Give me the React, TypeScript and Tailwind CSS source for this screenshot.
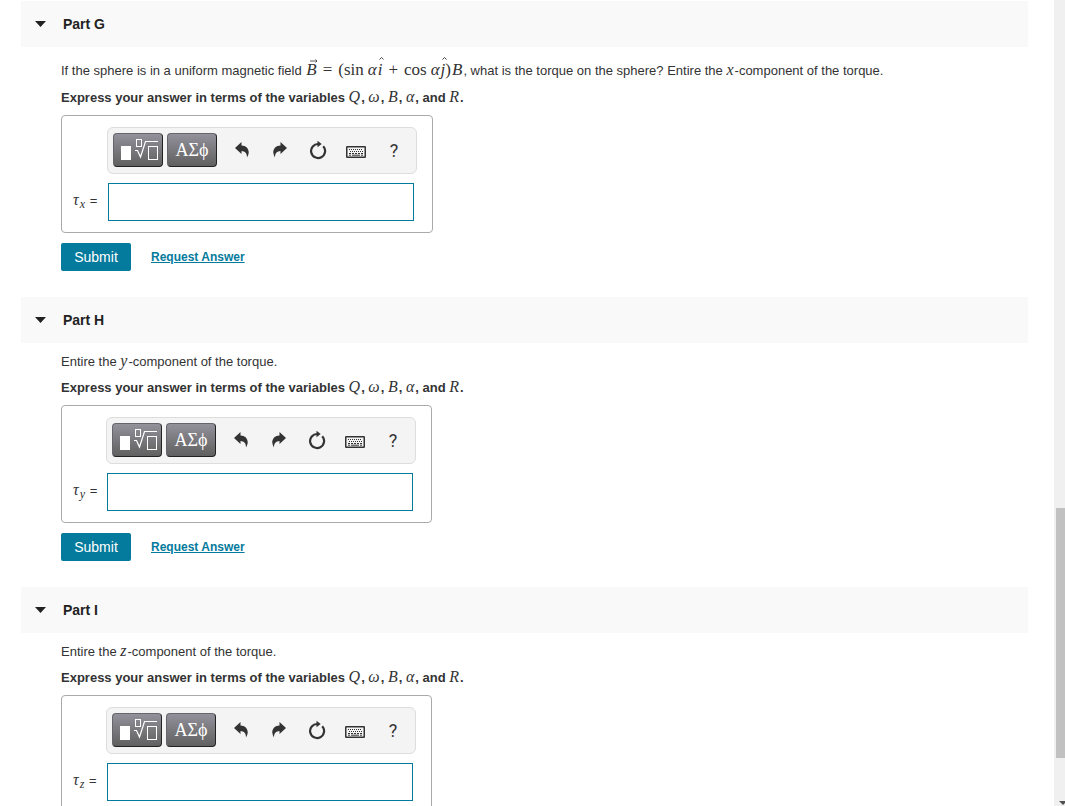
import React from 'react';

interface Part {
  id: string;
  title: string;
  axis: string;
  question: React.ReactNode;
}

function Var({ children }: { children: React.ReactNode }) {
  return <span className="mr-px font-['Liberation_Serif',serif] text-[16px] leading-none font-normal italic">{children}</span>;
}

function Vector({ children }: { children: React.ReactNode }) {
  return (
    <span className="relative inline-block">
      {children}
      <svg width="8" height="4" viewBox="0 0 8 4" fill="none" stroke="#333" strokeWidth=".8" className="absolute -top-0.5 left-1">
        <path d="M0 2h7M5.500 .5l1.500 1.500-1.500 1.500" />
      </svg>
    </span>
  );
}

function Hat({ children }: { children: React.ReactNode }) {
  return (
    <span className="relative inline-block">
      {children}
      <svg width="5" height="3" viewBox="0 0 5 3" fill="none" stroke="#333" strokeWidth=".9" className="absolute -top-1 left-px">
        <path d="M.5 2.500l2-2 2 2" />
      </svg>
    </span>
  );
}

function FieldFormula() {
  return (
    <span className="mx-px inline-flex items-baseline whitespace-pre font-['Liberation_Serif',serif] text-[17px] leading-none">
      <i><Vector>B</Vector></i>
      <span className="mx-1.5">=</span>
      <span>(sin</span>
      <i className="ml-1">α</i>
      <i className="ml-px"><Hat>i</Hat></i>
      <span className="mx-1.5">+</span>
      <span>cos</span>
      <i className="ml-1">α</i>
      <i className="ml-px"><Hat>j</Hat></i>
      <span>)</span>
      <i className="ml-px">B</i>
    </span>
  );
}

const PARTS: Part[] = [
  {
    id: 'g',
    title: 'Part G',
    axis: 'x',
    question: (
      <>
        If the sphere is in a uniform magnetic field <FieldFormula />, what is the torque on the sphere? Entire the <Var>x</Var>-component of the torque.
      </>
    ),
  },
  { id: 'h', title: 'Part H', axis: 'y', question: <>Entire the <Var>y</Var>-component of the torque.</> },
  { id: 'i', title: 'Part I', axis: 'z', question: <>Entire the <Var>z</Var>-component of the torque.</> },
];

function TemplateIcon() {
  return (
    <svg width="40" height="24" viewBox="0 0 40 24" fill="none" stroke="#fff">
      <rect x="3" y="8" width="10" height="14" fill="#fff" stroke="none" />
      <rect x="18.5" y="1.5" width="5" height="7" />
      <path d="M17 12.500h2.500L22.500 19l5-15.500H40" strokeWidth="1.200" />
      <rect x="30.5" y="8.5" width="9" height="13" />
    </svg>
  );
}

function CurvedArrow({ flip }: { flip?: boolean }) {
  return (
    <svg width="14" height="16" viewBox="0 0 14 16" fill="#333" className={flip ? '-scale-x-100' : ''}>
      <path d="M0 6 6.500 0V3.400C11 3.400 13.900 6.600 13.700 10.800 13.500 12.600 12.900 14 12 15.500 12.100 11.400 10 9.200 6.500 9.100V12Z" />
    </svg>
  );
}

function ResetIcon() {
  return (
    <svg width="18" height="20" viewBox="0 0 18 20" fill="none">
      <path d="M14.200 6.200A7 7 0 1 1 9.500 4" stroke="#333" strokeWidth="2.200" />
      <path d="M8.500 .8 12.700 4 8.500 7.200Z" fill="#333" />
    </svg>
  );
}

function KeyboardIcon() {
  return (
    <svg width="20" height="12" viewBox="0 0 20 12" fill="none" stroke="#333">
      <rect x=".75" y=".75" width="18.500" height="10.500" rx=".5" strokeWidth="1.500" />
      <path d="M3 3.500h14M4 5.500h13" strokeDasharray="1 1" />
      <path d="M3 7.500h14" strokeDasharray="2 1" />
      <path d="M3 9.200h2M6 9.200h8M15 9.200h2" />
    </svg>
  );
}

const ICON_BUTTON = 'flex h-8 w-[38px] items-center justify-center';
const DARK_BUTTON =
  'flex h-[34px] w-[50px] items-center justify-center rounded border border-t-[#66656b] border-l-[#66656b] border-r-[#222] border-b-[#222] bg-linear-to-b from-[#93919b] to-[#606060] text-white';

function Toolbar() {
  return (
    <div className="flex h-[47px] w-[310px] items-center rounded-md border border-[#ddd] bg-[#f4f4f4] pb-px pl-[5px]">
      <button type="button" aria-label="Templates" className={DARK_BUTTON}>
        <TemplateIcon />
      </button>
      <button type="button" aria-label="Symbols" className={`${DARK_BUTTON} ml-1 font-['Liberation_Serif',serif] text-[18px]`}>
        ΑΣϕ
      </button>
      <div className="ml-1.5 flex">
        <button type="button" aria-label="Undo" className={ICON_BUTTON}><CurvedArrow /></button>
        <button type="button" aria-label="Redo" className={ICON_BUTTON}><CurvedArrow flip /></button>
        <button type="button" aria-label="Reset" className={ICON_BUTTON}><ResetIcon /></button>
        <button type="button" aria-label="Keyboard shortcuts" className={`${ICON_BUTTON} pt-1`}><KeyboardIcon /></button>
        <button type="button" aria-label="Help" className={`${ICON_BUTTON} font-[Roboto,sans-serif] text-[18px] text-[#333]`}>?</button>
      </div>
    </div>
  );
}

function PartSection({ part }: { part: Part }) {
  const inputId = `answer-${part.id}`;
  const hasFormula = part.id === 'g';
  return (
    <section className="mb-[26px]">
      <h2 className="flex h-[46px] items-center bg-[#f9f9f9] pl-3.5 text-[14px] font-bold text-[#222]">
        <svg width="11" height="6" viewBox="0 0 11 6" fill="#222" className="mr-[17px]">
          <path d="M0 0h11L5.500 6z" />
        </svg>
        {part.title}
      </h2>
      <div className="pl-10">
        <p className={`leading-5 ${hasFormula ? 'pt-3.5' : 'pt-[9px]'}`}>{part.question}</p>
        <p className={`font-bold leading-5 ${hasFormula ? 'mt-[7px]' : 'mt-1.5'}`}>
          Express your answer in terms of the variables <Var>Q</Var>, <Var>ω</Var>, <Var>B</Var>, <Var>α</Var>, and <Var>R</Var>.
        </p>
        <div className="mt-[7px] flex h-[118px] w-fit rounded border border-[#aaa] pt-[11px] pr-[15px] pl-[11px]">
          <label htmlFor={inputId} className={`pt-[64px] leading-5 ${hasFormula ? 'w-[34px]' : 'w-[33px]'}`}>
            <Var>τ</Var>
            <sub className="mr-px font-['Liberation_Serif',serif] text-[12px] italic">{part.axis}</sub> =
          </label>
          <div>
            <Toolbar />
            <input id={inputId} type="text" className="mt-[9px] ml-px block h-[38px] w-[306px] border border-[#047a9c] bg-white px-2 text-[16px] outline-none" />
          </div>
        </div>
        <div className="mt-2.5 flex items-center">
          <button type="submit" className="h-7 w-[70px] rounded-xs bg-[#047a9c] text-[14px] text-white">Submit</button>
          <a href="#" className="ml-5 text-[12px] font-bold text-[#047a9c] underline">Request Answer</a>
        </div>
      </div>
    </section>
  );
}

export default function App() {
  return (
    <div className="flex h-screen overflow-hidden bg-white font-['Liberation_Sans',Arial,sans-serif] text-[13px] text-[#333]">
      <main className="min-w-0 flex-1 overflow-hidden pt-px pr-[26px] pl-[21px]">
        {PARTS.map((part) => (
          <PartSection key={part.id} part={part} />
        ))}
      </main>
      <div aria-hidden="true" className="flex w-[11px] flex-col items-end bg-[#f0f0f0]">
        <div className="grow-[508] basis-0" />
        <div className="w-[9px] grow-[250] basis-0 bg-[#c1c1c1]" />
        <div className="flex grow-[48] basis-0 items-end">
          <svg width="6" height="5" viewBox="0 0 6 5" fill="#505050">
            <path d="M0 0h6v2L4 4z" />
          </svg>
        </div>
      </div>
    </div>
  );
}
